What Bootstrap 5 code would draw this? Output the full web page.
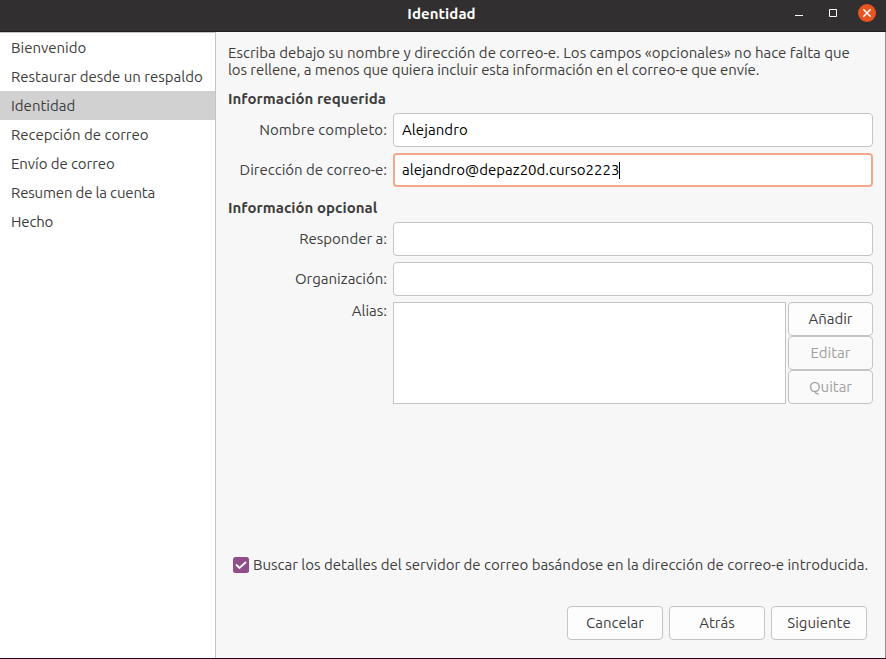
<!DOCTYPE html>
<html lang="es">
<head>
<meta charset="utf-8">
<meta name="viewport" content="width=device-width, initial-scale=1">
<title>Identidad</title>
<link href="https://cdn.jsdelivr.net/npm/bootstrap@5.3.0/dist/css/bootstrap.min.css" rel="stylesheet">
<style>
body{font:15px/17px Ubuntu,"Noto Sans",sans-serif;color:#3d3d3d;background:#f7f7f7}
.window{height:659px;border-bottom:1px solid #2c001e}
.titlebar{height:32px;background:#322f30;border-bottom:1px solid #1f1d1e;color:#fff;display:grid;grid-template-columns:1fr auto 1fr;padding-right:3px}
.titlebar h1{font-size:15px;line-height:17px;letter-spacing:.08px;margin:0 0 5px}
.win-btn{border:0;background:none;padding:0;width:18px;height:18px;display:block}
.win-controls{gap:16px;margin:0 7px 5px 0}
.steps{width:216px;border-top:1px solid #c4c4c4;border-right:1px solid #c4c4c4;background:#fff}
.steps .list-group-item{height:29px;padding:6px 11px;border:0;color:#3d3d3d;background:#fff;white-space:nowrap}
.steps .list-group-item.active{background:#d1d1d1;color:#3d3d3d;margin:0}
.page{padding:12px 12px 18px;border-right:1px solid #8f8f8f;min-width:0}
.intro{margin:0;white-space:nowrap}
.snug{letter-spacing:-.07px}
.snugger{letter-spacing:-.17px}
.airy{letter-spacing:.08px}
.page h2{font-size:15px;line-height:17px;letter-spacing:.04px;margin:12px 0 6px}
.fields{display:grid;grid-template-columns:159px 480px;column-gap:6px;row-gap:6px}
.fields>label{text-align:right;white-space:nowrap;align-self:center;padding-bottom:2px}
.fields .form-control{height:34px;border:1px solid #c4c4c4;border-radius:4px;padding:0 8px;font:inherit;line-height:32px;color:#000;background:#fff;white-space:nowrap}
.fields .form-control.focused{border:2px solid #f3a88e;padding:0 7px;line-height:30px}
.caret{display:inline-block;width:1px;height:17px;background:#000;vertical-align:-4px}
.alias-list{width:393px;height:102px;border:1px solid #c4c4c4;background:#fff}
.page .btn{height:34px;padding:0 0 2px;font:inherit;border:1px solid #c4c4c4;border-radius:4px;background:#fdfdfd;color:#3d3d3d}
.page .btn:disabled{background:#fafafa;color:#a0a0a0;opacity:1}
.alias-actions{width:85px}
.actions .btn{width:96px}
.actions{padding-right:6px;gap:6px;margin-top:33px}
.lookup{padding-left:5px;gap:4px;white-space:nowrap}
</style>
<script src="https://cdn.jsdelivr.net/npm/bootstrap@5.3.0/dist/js/bootstrap.bundle.min.js" defer></script>
</head>
<body>
<div class="window d-flex flex-column overflow-hidden">
  <header class="titlebar align-items-center">
    <span></span>
    <h1 class="fw-bold">Identidad</h1>
    <div class="win-controls d-flex justify-content-end">
      <button class="win-btn" aria-label="Minimizar"><svg class="d-block" width="18" height="18"><path d="M5 11.5h8" stroke="#fff"/></svg></button>
      <button class="win-btn" aria-label="Maximizar"><svg class="d-block" width="18" height="18"><path d="M5.500 5.500h7v7h-7z" fill="none" stroke="#fff"/></svg></button>
      <button class="win-btn" aria-label="Cerrar"><svg class="d-block" width="18" height="18"><circle cx="9" cy="9" r="9" fill="#e95420"/><path d="M5.300 5.300l7.400 7.400m0-7.400l-7.400 7.400" stroke="#fff" stroke-width="1.500"/></svg></button>
    </div>
  </header>
  <div class="d-flex flex-grow-1">
    <nav class="steps list-group list-group-flush rounded-0 flex-shrink-0">
      <div class="list-group-item">Bienvenido</div>
      <div class="list-group-item">Restaurar desde un respaldo</div>
      <div class="list-group-item active">Identidad</div>
      <div class="list-group-item">Recepción de correo</div>
      <div class="list-group-item snug">Envío de correo</div>
      <div class="list-group-item snugger">Resumen de la cuenta</div>
      <div class="list-group-item snugger">Hecho</div>
    </nav>
    <main class="page d-flex flex-column flex-grow-1">
      <p class="intro">Escriba debajo su nombre y dirección de correo-e. Los campos «opcionales» no hace falta que<br><span class="snug">los rellene, a menos que quiera incluir esta información en el correo-e que envíe.</span></p>
      <h2 class="fw-bold">Información requerida</h2>
      <section class="fields">
        <label class="airy">Nombre completo:</label><div class="form-control airy">Alejandro</div>
        <label>Dirección de correo-e:</label><div class="form-control focused">alejandro@depaz20d.curso2223<i class="caret"></i></div>
      </section>
      <h2 class="fw-bold">Información opcional</h2>
      <section class="fields">
        <label>Responder a:</label><div class="form-control"></div>
        <label>Organización:</label><div class="form-control"></div>
        <label class="align-self-start">Alias:</label>
        <div class="d-flex justify-content-between">
          <div class="alias-list"></div>
          <div class="alias-actions d-flex flex-column">
            <button class="btn">Añadir</button>
            <button class="btn" disabled>Editar</button>
            <button class="btn" disabled>Quitar</button>
          </div>
        </div>
      </section>
      <div class="lookup d-flex align-items-center mt-auto">
        <svg width="16" height="16"><rect width="16" height="16" rx="2.500" fill="#924d8b"/><path d="M3 7.500l3.500 3.500 6.500-6" fill="none" stroke="#fff" stroke-width="1.800"/></svg>
        <span>Buscar los detalles del servidor de correo basándose en la dirección de correo-e introducida.</span>
      </div>
      <div class="actions d-flex justify-content-end">
        <button class="btn">Cancelar</button>
        <button class="btn">Atrás</button>
        <button class="btn">Siguiente</button>
      </div>
    </main>
  </div>
</div>
</body>
</html>
